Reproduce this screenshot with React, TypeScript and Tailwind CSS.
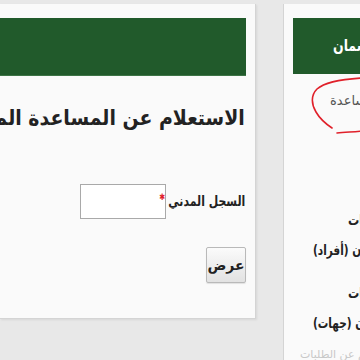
import React from "react";

const font = { fontFamily: '"DejaVu Sans", sans-serif' };

export default function App() {
  return (
    <div
      className="relative w-[360px] h-[360px] overflow-hidden bg-[#e8e8e8] pt-[4px] flex items-start"
      style={font}
    >
      {/* Main panel */}
      <div className="w-[256px] shrink-0 h-[315px] bg-[#fafafa] border-r border-b border-[#d4d4d4] shadow-[1px_1px_2px_rgba(0,0,0,0.08)] pt-[14px] overflow-hidden" dir="rtl">
        <div className="h-[58px] mr-[9px] bg-[#215a2b] border-b border-[#3d7446]" />
        <div className="mt-[28px] pr-[10px] whitespace-nowrap text-[21px] leading-[28px] font-bold text-[#222]">
          <span className="inline-block origin-right scale-x-[0.9]">الاستعلام عن المساعدة المقطوعة</span>
        </div>
        <div className="mt-[52px] pr-[10px] flex items-center gap-[2px]">
          <div className="w-[77px] shrink-0 flex justify-start">
            <span className="inline-block whitespace-nowrap origin-right scale-x-[0.78] text-[14px] font-bold text-[#222]">
              السجل المدني<span className="text-[#e0202a] text-[9px] align-top mr-[4px]">✱</span>
            </span>
          </div>
          <div className="w-[86px] h-[35px] bg-white border border-[#a9a9a9]" />
        </div>
        <div className="mt-[28px] mr-[9px] flex">
          <button className="w-[40px] h-[36px] rounded-[2px] border border-[#b9b9b9] bg-gradient-to-b from-[#fbfbfb] to-[#e2e2e2] text-[14px] font-bold text-[#222] shadow-[0_1px_1px_rgba(0,0,0,0.1)]">
            عرض
          </button>
        </div>
      </div>

      {/* Right panel */}
      <div className="ml-[27px] w-[120px] shrink-0 h-[360px] bg-[#fafafa] border-l border-[#d4d4d4] pt-[14px]">
        <div className="ml-[9px] h-[56px] bg-[#215a2b] flex items-center overflow-hidden">
          <span dir="rtl" className="ml-[40px] whitespace-nowrap origin-left scale-x-[0.78] inline-block text-[16px] font-bold text-white">
            خدمات الضمان
          </span>
        </div>
        <div className="mt-[17px] h-[20px] leading-[20px] pl-[46px] whitespace-nowrap text-[13px] text-[#555]">
          <span dir="rtl" className="inline-block">الاستعلام عن المساعدة</span>
        </div>
        <div className="mt-[99px] h-[20px] leading-[20px] pl-[64px] whitespace-nowrap text-[14px] font-bold text-[#222]">
          <span dir="rtl" className="inline-block origin-left scale-x-[0.8]">الاستعلامات</span>
        </div>
        <div className="mt-[10px] h-[20px] leading-[20px] pl-[29px] whitespace-nowrap text-[14px] font-bold text-[#222]">
          <span dir="rtl" className="inline-block origin-left scale-x-[0.75]">الضمان (أفراد)</span>
        </div>
        <div className="mt-[23px] h-[20px] leading-[20px] pl-[64px] whitespace-nowrap text-[14px] font-bold text-[#222]">
          <span dir="rtl" className="inline-block origin-left scale-x-[0.8]">الاستعلامات</span>
        </div>
        <div className="mt-[10px] h-[20px] leading-[20px] pl-[29px] whitespace-nowrap text-[14px] font-bold text-[#222]">
          <span dir="rtl" className="inline-block origin-left scale-x-[0.75]">الضمان (جهات)</span>
        </div>
        <div className="mt-[12px] h-[20px] leading-[20px] pl-[16px] whitespace-nowrap text-[11px] text-[#c8c8c8]">
          <span dir="rtl" className="inline-block">الاستعلام عن الطلبات</span>
        </div>
      </div>

      {/* Red annotation */}
      <svg className="absolute left-0 top-0 pointer-events-none" width="360" height="360" viewBox="0 0 360 360">
        <path
          d="M362 78 C 345 79, 325 82, 317 89 C 311 95, 311 104, 316 112 C 320 119, 326 124, 332 128"
          fill="none"
          stroke="#e0202a"
          strokeWidth="1.6"
          strokeLinecap="round"
        />
        <path
          d="M337 133 C 345 132, 353 132, 362 131"
          fill="none"
          stroke="#e0202a"
          strokeWidth="1.6"
          strokeLinecap="round"
        />
      </svg>
    </div>
  );
}
